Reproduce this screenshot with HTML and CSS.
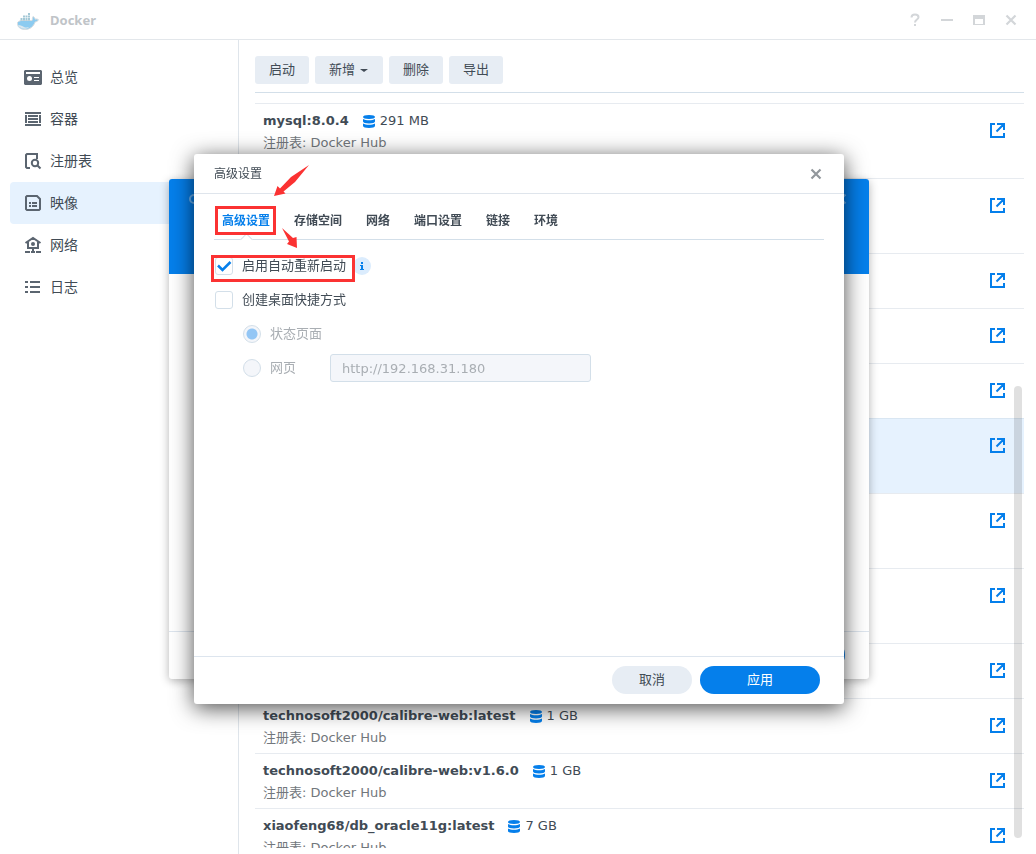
FILE: index.html
```html
<!DOCTYPE html>
<html lang="zh-CN">
<head>
<meta charset="utf-8">
<meta name="viewport" content="width=device-width, initial-scale=1">
<title>Docker</title>
<link rel="stylesheet" href="styles.css">
</head>

<body>

<svg class="sprite" aria-hidden="true">
  <symbol id="i-link" viewBox="0 0 15 15">
    <path d="M5 1H1v13h13v-4M7 1h7v6M6.500 8.500L13 2" fill="none" stroke="#057feb" stroke-width="2"/>
  </symbol>
  <symbol id="i-db" viewBox="0 0 12 13">
    <g fill="#057feb">
      <path d="M0 2C0 .8 2 0 6 0s6 .8 6 2-2 2-6 2-6-.8-6-2z"/>
      <path d="M0 4c1.500 1 3.500 1.200 6 1.200S10.500 5 12 4v2.500c0 1.200-2.500 2-6 2s-6-.8-6-2z"/>
      <path d="M0 8.500c1.500 1 3.500 1.200 6 1.200s4.500-.2 6-1.200V11c0 1.200-2.500 2-6 2s-6-.8-6-2z"/>
    </g>
  </symbol>
  <symbol id="i-close" viewBox="0 0 12 12">
    <path d="M1.500 1.500l9 9M10.500 1.500l-9 9" fill="none" stroke="currentColor" stroke-width="2.200"/>
  </symbol>
</svg>

<div class="window">
  <header class="titlebar">
    <svg class="logo" viewBox="0 0 22 22" width="22" height="22" aria-hidden="true">
      <path d="M.5 13.500C1.500 12 3 12 4 11.500h11c.7-1 0-2.500 1-4 1.500.7 2 1.700 2.200 2.700 1.300-.4 2.300-.2 3.300.5-.7 1.500-1.800 2-3.300 2.200C16.500 17.500 13 20.500 8 20.500c-4.500 0-8-2.500-7.500-7z" fill="#8ccbf0" stroke="#dadddf"/>
      <path d="M3.500 9h2v2.500h-2zM6 9h2v2.500H6zM8.500 9h2v2.500h-2zM11 9h2v2.500h-2zM6 6.500h2v2H6zM8.500 6.500h2v2h-2zM11 6.500h2v2h-2zM11 4h2v2h-2z" fill="#a3c8d6"/>
      <path d="M1 16c3 .5 4 .5 6 2 2 1 4 .5 5.500-.3C10 20.500 3.500 20.800 1 16z" fill="#dce7ed"/>
    </svg>
    <h1>Docker</h1>
    <div class="controls">
      <button type="button" aria-label="帮助"><svg viewBox="0 0 14 14"><path d="M3.500 4.500C3.500 2 5 1.500 7 1.500s3.500.8 3.500 2.700C10.500 6.500 7 6.500 7 9.500M7 11v2" fill="none" stroke="currentColor" stroke-width="2"/></svg></button>
      <button type="button" aria-label="最小化"><svg viewBox="0 0 14 14"><path d="M1 7h12" stroke="currentColor" stroke-width="2"/></svg></button>
      <button type="button" aria-label="最大化"><svg viewBox="0 0 14 14"><path d="M1 2h12v10H1zM3 6v5h8V6z" fill="currentColor" fill-rule="evenodd"/></svg></button>
      <button type="button" aria-label="关闭"><svg viewBox="0 0 14 14"><path d="M2.500 2.500l9 9M11.500 2.500l-9 9" stroke="currentColor" stroke-width="2.200"/></svg></button>
    </div>
  </header>

  <div class="body">
    <nav class="sidebar">
      <a href="#overview">
        <svg viewBox="0 0 18 18"><path d="M1 2h16l1 1v13l-1 1H1l-1-1V3zM2 4v2h14V4z" fill="#5b6570" fill-rule="evenodd"/><circle cx="5.500" cy="10.500" r="2.500" fill="#fff"/><path d="M10 9.500h5M10 12.500h5" stroke="#fff"/></svg>
        总览
      </a>
      <a href="#container">
        <svg viewBox="0 0 18 18"><path d="M1 3h16M1 15h16M2 5v8M16 5v8M4 6h10M4 9h10M4 12h10" fill="none" stroke="#5b6570" stroke-width="2"/></svg>
        容器
      </a>
      <a href="#registry">
        <svg viewBox="0 0 18 18"><path d="M6 16H3l-1-1V3l1-1h10v5" fill="none" stroke="#5b6570" stroke-width="2"/><circle cx="11" cy="11" r="3.200" fill="none" stroke="#5b6570" stroke-width="2"/><path d="M13.200 13.200l3.300 3.300" stroke="#5b6570" stroke-width="2"/></svg>
        注册表
      </a>
      <a href="#image" class="active">
        <svg viewBox="0 0 18 18"><path d="M2 3l1-1h10l3 3v10l-1 1H3l-1-1z" fill="none" stroke="#5b6570" stroke-width="2"/><path d="M5 9h2M8 9h5M5 12h2M8 12h5" stroke="#5b6570" stroke-width="2"/></svg>
        映像
      </a>
      <a href="#network">
        <svg viewBox="0 0 18 18"><path d="M1.500 7L9 2l7.500 5M4 6v6h10V6M9 12v3M1 16h5M7 16h4M12 16h5" fill="none" stroke="#5b6570" stroke-width="2"/><circle cx="9" cy="8" r="2" fill="#5b6570"/></svg>
        网络
      </a>
      <a href="#log">
        <svg viewBox="0 0 18 18"><path d="M1 4h3M6 4h10M1 9h3M6 9h10M1 14h3M6 14h10" stroke="#5b6570" stroke-width="2"/></svg>
        日志
      </a>
    </nav>

    <main class="main">
      <div class="toolbar">
        <button type="button">启动</button>
        <button type="button">新增<span class="caret"></span></button>
        <button type="button">删除</button>
        <button type="button">导出</button>
      </div>
      <div class="list-wrap">
        <ul class="list">
          <li class="tall">
            <div>
              <p class="name"><b>mysql:8.0.4</b><svg width="12" height="13"><use href="#i-db"/></svg>291 MB</p>
              <p class="repo">注册表: Docker Hub</p>
            </div>
            <a href="#open" aria-label="打开"><svg><use href="#i-link"/></svg></a>
          </li>
          <li class="tall"><a href="#open" aria-label="打开"><svg><use href="#i-link"/></svg></a></li>
          <li><a href="#open" aria-label="打开"><svg><use href="#i-link"/></svg></a></li>
          <li><a href="#open" aria-label="打开"><svg><use href="#i-link"/></svg></a></li>
          <li><a href="#open" aria-label="打开"><svg><use href="#i-link"/></svg></a></li>
          <li class="tall selected"><a href="#open" aria-label="打开"><svg><use href="#i-link"/></svg></a></li>
          <li class="tall"><a href="#open" aria-label="打开"><svg><use href="#i-link"/></svg></a></li>
          <li class="tall"><a href="#open" aria-label="打开"><svg><use href="#i-link"/></svg></a></li>
          <li><a href="#open" aria-label="打开"><svg><use href="#i-link"/></svg></a></li>
          <li>
            <div>
              <p class="name"><b>technosoft2000/calibre-web:latest</b><svg width="12" height="13"><use href="#i-db"/></svg>1 GB</p>
              <p class="repo">注册表: Docker Hub</p>
            </div>
            <a href="#open" aria-label="打开"><svg><use href="#i-link"/></svg></a>
          </li>
          <li>
            <div>
              <p class="name"><b>technosoft2000/calibre-web:v1.6.0</b><svg width="12" height="13"><use href="#i-db"/></svg>1 GB</p>
              <p class="repo">注册表: Docker Hub</p>
            </div>
            <a href="#open" aria-label="打开"><svg><use href="#i-link"/></svg></a>
          </li>
          <li>
            <div>
              <p class="name"><b>xiaofeng68/db_oracle11g:latest</b><svg width="12" height="13"><use href="#i-db"/></svg>7 GB</p>
              <p class="repo">注册表: Docker Hub</p>
            </div>
            <a href="#open" aria-label="打开"><svg><use href="#i-link"/></svg></a>
          </li>
        </ul>
        <div class="scrollbar"></div>
      </div>
    </main>
  </div>
</div>

<!-- wizard behind the settings dialog -->
<div class="overlay">
  <div class="dialog wizard">
    <div class="wizard-head">
      <svg viewBox="0 0 12 12" width="12" height="12"><circle cx="6" cy="6" r="4" fill="none" stroke="currentColor" stroke-width="2"/></svg>
      <svg width="12" height="12"><use href="#i-close"/></svg>
    </div>
    <div class="dialog-foot"><span class="stub"></span></div>
  </div>
</div>

<div class="overlay">
  <div class="dialog settings" role="dialog" aria-labelledby="dlg-title">
    <header class="dialog-head">
      <h2 id="dlg-title">高级设置</h2>
      <button type="button" class="close" aria-label="关闭"><svg width="12" height="12"><use href="#i-close"/></svg></button>
    </header>

    <div class="dialog-body">
      <div class="tabs" role="tablist">
        <button type="button" role="tab" class="active" aria-selected="true">高级设置</button>
        <button type="button" role="tab">存储空间</button>
        <button type="button" role="tab">网络</button>
        <button type="button" role="tab">端口设置</button>
        <button type="button" role="tab">链接</button>
        <button type="button" role="tab">环境</button>
      </div>

      <form class="options" id="options">
        <div class="row">
          <input type="checkbox" id="restart" checked>
          <label for="restart">启用自动重新启动</label>
          <svg class="info" viewBox="0 0 18 18" width="18" height="18"><circle cx="9" cy="9" r="9" fill="#dbecfd"/><path d="M8 5h2v2H8zM7 8h3v4h1v1H7v-1h1V9H7z" fill="#057feb"/></svg>
        </div>
        <div class="row">
          <input type="checkbox" id="shortcut">
          <label for="shortcut">创建桌面快捷方式</label>
        </div>
        <div class="row sub">
          <input type="radio" name="target" id="status" checked disabled>
          <label for="status">状态页面</label>
        </div>
        <div class="row sub">
          <input type="radio" name="target" id="web" disabled>
          <label for="web" class="web-label">网页</label>
          <input type="text" aria-label="网页" value="http://192.168.31.180" disabled>
        </div>
      </form>
    </div>

    <footer class="dialog-foot">
      <button type="button" class="btn">取消</button>
      <button type="submit" form="options" class="btn primary">应用</button>
    </footer>

    <!-- red marks over the tab and the first option -->
    <svg class="marks" viewBox="0 0 180 140" width="180" height="140" aria-hidden="true">
      <g fill="none" stroke="#fb3232" stroke-width="3">
        <path d="M22.500 53.500h58v26h-58z"/>
        <path d="M18.500 102.500h141v24h-141z"/>
      </g>
      <path d="M115 11L97 23 86 34.500 83.500 32 80 42l11.500-2.500-2-2L101 28z" fill="#fb3232"/>
      <path d="M88 74l11 10 3.500-1L103 94l-10-4 2-2.500z" fill="#fb3232"/>
    </svg>
  </div>
</div>

</body>
</html>
```
FILE: styles.css
```css
* {
  box-sizing: border-box;
}

body {
  margin: 0;
  font-family: "DejaVu Sans", "Noto Sans CJK SC", sans-serif;
  font-size: 13px;
  line-height: 22px;
  color: #414b55;
  background: #fff;
}

h1, h2, p, ul {
  margin: 0;
  padding: 0;
}

button, input {
  font: inherit;
  color: inherit;
}

button {
  border: 0;
  padding: 0;
  background: none;
  cursor: pointer;
}

.sprite {
  display: none;
}

.window {
  display: flex;
  flex-direction: column;
  height: 100vh;
  overflow: hidden;
}

/* title bar */
.titlebar {
  display: flex;
  align-items: center;
  flex: none;
  height: 40px;
  padding: 0 18px 0 17px;
  border-bottom: 1px solid #e3e7eb;
}

.titlebar h1 {
  margin-left: 11px;
  font-family: "Noto Sans", sans-serif;
  font-size: 13px;
  line-height: 20px;
  color: #c0c4c8;
}

.controls {
  display: flex;
  gap: 18px;
  margin-left: auto;
  color: #d3d6d9;
}

.controls svg {
  display: block;
  width: 14px;
  height: 14px;
}

.body {
  display: flex;
  flex: 1;
  min-height: 0;
}

/* sidebar */
.sidebar {
  flex: none;
  width: 239px;
  padding: 16px 10px;
  border-right: 1px solid #dfe5eb;
}

.sidebar a {
  display: flex;
  align-items: center;
  gap: 8px;
  height: 42px;
  padding-left: 14px;
  border-radius: 4px;
  font-size: 14px;
  color: #414b55;
  text-decoration: none;
}

.sidebar a.active {
  background: #e6f2fe;
}

.sidebar svg {
  width: 18px;
  height: 18px;
}

/* image list */
.main {
  display: flex;
  flex: 1;
  flex-direction: column;
  min-width: 0;
  padding: 16px 12px 6px 16px;
}

.toolbar {
  display: flex;
  gap: 6px;
  padding-bottom: 8px;
  border-bottom: 1px solid #d3dfe9;
}

.toolbar button {
  height: 28px;
  padding: 0 14px;
  border-radius: 3px;
  background: #e7edf4;
}

.caret {
  display: inline-block;
  margin: 0 1px 0 5px;
  border: 4px solid transparent;
  border-top: 3px solid #414b55;
  border-bottom: 0;
  vertical-align: middle;
}

.list-wrap {
  position: relative;
  flex: 1;
  min-height: 0;
  padding-top: 10px;
  overflow: hidden;
}

.list {
  list-style: none;
}

.list li {
  display: flex;
  justify-content: space-between;
  min-height: 55px;
  padding: 6px 19px 4px 8px;
  border-top: 1px solid #e7ebf0;
}

.list li.tall {
  min-height: 75px;
}

.list li.selected {
  background: #e6f2fe;
  border-color: #d9e6f2;
}

.list .name {
  display: flex;
  align-items: center;
}

.name svg {
  margin: 0 5px 0 14px;
}

.list .repo {
  color: #72777c;
}

.list a {
  margin: 13px 0 0 auto;
  height: 15px;
}

.list a svg {
  display: block;
  width: 15px;
  height: 15px;
}

.scrollbar {
  position: absolute;
  top: 293px;
  right: 2px;
  bottom: 10px;
  width: 8px;
  border-radius: 4px;
  background: rgba(0, 0, 0, .12);
}

/* dialogs */
.overlay {
  position: fixed;
  top: 4px;
  left: 2px;
  right: 0;
  bottom: 0;
  display: flex;
  align-items: center;
  justify-content: center;
}

.dialog {
  position: relative;
  display: flex;
  flex-direction: column;
  border-radius: 3px;
  background: #fff;
}

.wizard {
  width: 700px;
  min-height: 500px;
  overflow: hidden;
  box-shadow: 0 2px 10px rgba(0, 0, 0, .3);
}

.wizard-head {
  display: flex;
  justify-content: space-between;
  height: 95px;
  padding: 14px 22px 0 19px;
  background: #057feb;
  color: #69b2f3;
}

.settings {
  width: 650px;
  min-height: 550px;
  box-shadow: 0 4px 22px rgba(0, 0, 0, .7);
}

.dialog-head {
  display: flex;
  align-items: center;
  justify-content: space-between;
  height: 40px;
  padding: 0 22px 0 20px;
  border-bottom: 1px solid #dfe5ec;
}

.dialog-head h2 {
  font-size: 12px;
  font-weight: normal;
}

.close {
  height: 12px;
  color: #92979c;
}

.close svg {
  display: block;
}

.dialog-body {
  padding: 8px 20px;
}

.tabs {
  display: flex;
  gap: 24px;
  height: 38px;
  padding-left: 8px;
  border-bottom: 1px solid #d3dfe9;
}

.tabs button {
  position: relative;
  font-size: 12px;
  font-weight: bold;
}

.tabs .active {
  color: #057feb;
}

/* notch under the open tab */
.tabs .active::after {
  content: "";
  position: absolute;
  left: 50%;
  bottom: -5px;
  width: 8px;
  height: 8px;
  margin-left: -4px;
  border: solid #d3dfe9;
  border-width: 1px 0 0 1px;
  background: #fff;
  transform: rotate(45deg);
}

.options {
  padding-top: 9px;
}

.row {
  display: flex;
  align-items: center;
  height: 34px;
  padding-left: 1px;
}

.row.sub {
  padding-left: 29px;
  color: #a9aeb3;
}

.row label {
  margin-left: 9px;
}

.row .web-label {
  width: 60px;
}

.row .info {
  margin-left: 7px;
}

.row input[type="checkbox"],
.row input[type="radio"] {
  flex: none;
  appearance: none;
  width: 18px;
  height: 18px;
  margin: 0;
  border: 1px solid #d3dfe9;
  border-radius: 3px;
  background: #fff;
}

.row input[type="checkbox"]:checked {
  background: url("data:image/svg+xml,%3Csvg xmlns='http://www.w3.org/2000/svg' viewBox='0 0 16 16'%3E%3Cpath d='M2 7.500l4.500 4.500L14.500 4' fill='none' stroke='%23057feb' stroke-width='2.500'/%3E%3C/svg%3E") center / 16px no-repeat;
}

.row input[type="radio"] {
  border-radius: 50%;
  background: #f4f6fa;
}

.row input[type="radio"]:checked {
  background: radial-gradient(circle, #93c6f5 5px, #f4f6fa 6px);
}

.row input[type="text"] {
  width: 261px;
  height: 28px;
  padding: 0 11px;
  border: 1px solid #d3dfe9;
  border-radius: 3px;
  background: #f4f6fa;
  color: #a9aeb3;
}

.dialog-foot {
  display: flex;
  justify-content: flex-end;
  gap: 8px;
  height: 48px;
  margin-top: auto;
  padding: 9px 24px 0;
  border-top: 1px solid #dde5ee;
}

.btn {
  width: 80px;
  height: 28px;
  border-radius: 14px;
  background: #e7edf4;
}

.btn.primary,
.stub {
  width: 120px;
  height: 28px;
  border-radius: 14px;
  background: #057feb;
  color: #fff;
}

.marks {
  position: absolute;
  top: 0;
  left: 0;
  pointer-events: none;
}
```
